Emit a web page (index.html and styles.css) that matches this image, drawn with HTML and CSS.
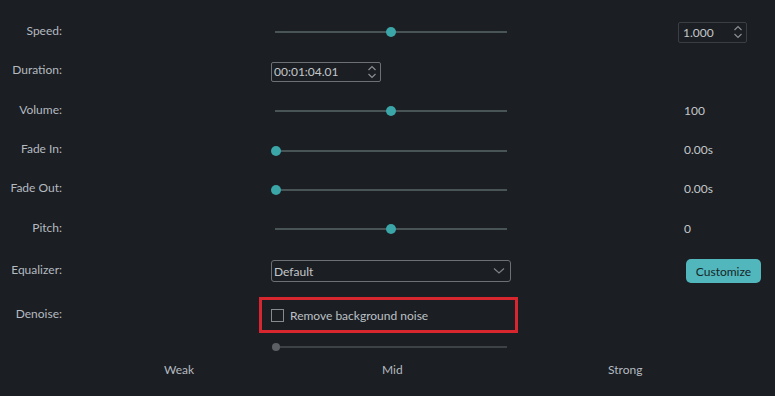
FILE: index.html
```html
<!DOCTYPE html>
<html>
<head>
<meta charset="utf-8">
<link rel="stylesheet" href="styles.css">
</head>
<body>
<div class="panel">
  <div class="row r40"><span class="label">Speed:</span>
    <div class="ctl"><div class="slider"><span class="thumb" style="--p:0.5"></span></div></div>
    <div class="val"><div class="spin small"><span>1.000</span>
      <svg width="10" height="16" viewBox="0 0 10 16"><path d="M1.5 6 L5 2.5 L8.5 6 M1.5 10 L5 13.5 L8.5 10" fill="none" stroke="#8a8f94" stroke-width="1.2"/></svg></div></div>
  </div>
  <div class="row r39"><span class="label">Duration:</span>
    <div class="ctl"><div class="spin dur"><span>00:01:04.01</span>
      <svg width="10" height="16" viewBox="0 0 10 16"><path d="M1.5 6 L5 2.5 L8.5 6 M1.5 10 L5 13.5 L8.5 10" fill="none" stroke="#8a8f94" stroke-width="1.2"/></svg></div></div>
    <div class="val"></div>
  </div>
  <div class="row r40"><span class="label">Volume:</span>
    <div class="ctl"><div class="slider"><span class="thumb" style="--p:0.5"></span></div></div>
    <div class="val"><span class="num">100</span></div>
  </div>
  <div class="row r39"><span class="label">Fade In:</span>
    <div class="ctl"><div class="slider"><span class="thumb" style="--p:0"></span></div></div>
    <div class="val"><span class="num">0.00s</span></div>
  </div>
  <div class="row r39"><span class="label">Fade Out:</span>
    <div class="ctl"><div class="slider"><span class="thumb" style="--p:0"></span></div></div>
    <div class="val"><span class="num">0.00s</span></div>
  </div>
  <div class="row r40"><span class="label">Pitch:</span>
    <div class="ctl"><div class="slider"><span class="thumb" style="--p:0.5"></span></div></div>
    <div class="val"><span class="num">0</span></div>
  </div>
  <div class="row r44"><span class="label">Equalizer:</span>
    <div class="ctl"><div class="select"><span>Default</span>
      <svg width="12" height="8" viewBox="0 0 12 8"><path d="M1 1.5 L6 6 L11 1.5" fill="none" stroke="#7d8286" stroke-width="1.2"/></svg></div></div>
    <div class="val"><button class="btn">Customize</button></div>
  </div>
  <div class="row r44"><span class="label">Denoise:</span>
    <div class="ctl"><div class="highlight"><span class="check"></span><span class="checktext">Remove background noise</span></div></div>
    <div class="val"></div>
  </div>
  <div class="row r20"><span class="label"></span>
    <div class="ctl"><div class="slider off"><span class="thumb" style="--p:0"></span></div></div>
    <div class="val"></div>
  </div>
  <div class="scale">
    <span class="s1">Weak</span><span class="s2">Mid</span><span class="s3">Strong</span>
  </div>
</div>
</body>
</html>
```
FILE: styles.css
```css
html, body {
  margin: 0;
  padding: 0;
  background: #1b1e22;
  width: 775px;
  height: 396px;
  overflow: hidden;
}
body {
  font-family: Lato, "Open Sans", sans-serif;
  font-size: 12px;
  color: #b9bec3;
}
.panel {
  padding-top: 12px;
  display: flex;
  flex-direction: column;
}
.row {
  display: grid;
  grid-template-columns: 271px 240px 1fr;
  align-items: center;
}
.r40 { height: 40px; }
.r39 { height: 39px; }
.r44 { height: 44px; }
.r20 { height: 20px; }
.label {
  width: 62px;
  text-align: right;
  padding-bottom: 4px;
  color: #b4bac0;
  white-space: nowrap;
}
.ctl {
  display: flex;
  align-items: center;
}
.slider {
  position: relative;
  margin-left: 4px;
  width: 232px;
  height: 2px;
  background: #485456;
}
.thumb {
  position: absolute;
  top: -4px;
  left: calc(var(--p) * 230px - 4px);
  width: 10px;
  height: 10px;
  border-radius: 50%;
  background: #3ba6a8;
}
.slider.off { background: #3d4246; }
.slider.off .thumb {
  top: -3px;
  width: 8px;
  height: 8px;
  left: -3px;
  background: #5c6064;
}
.spin {
  display: flex;
  align-items: center;
  justify-content: space-between;
  box-sizing: border-box;
  border-radius: 2px;
}
.spin.dur {
  width: 110px;
  height: 20px;
  border: 1px solid #6d7176;
  padding: 0 3px 0 2px;
  color: #c3c7cb;
}
.spin.small {
  width: 69px;
  height: 21px;
  margin-left: 167px;
  border: 1px solid #3a3f45;
  padding: 0 3px 0 4px;
  color: #c3c7cb;
}
.val {
  display: flex;
  align-items: center;
}
.num {
  margin-left: 173px;
  padding-bottom: 2px;
  color: #c3c7cb;
}
.select {
  display: flex;
  align-items: center;
  justify-content: space-between;
  box-sizing: border-box;
  width: 240px;
  height: 22px;
  border: 1px solid #6d7176;
  border-radius: 3px;
  padding: 0 5px 0 2px;
  color: #c3c7cb;
}
.btn {
  margin-left: 175px;
  width: 75px;
  height: 24px;
  border: none;
  border-radius: 5px;
  background: #52b7bc;
  color: #162629;
  font-family: Lato, "Open Sans", sans-serif;
  font-size: 12px;
  padding: 0;
}
.highlight {
  box-sizing: border-box;
  flex-shrink: 0;
  margin-left: -12px;
  width: 259px;
  height: 36px;
  border: 3px solid #d7262e;
  display: flex;
  align-items: center;
  padding-left: 9px;
}
.check {
  box-sizing: border-box;
  width: 13px;
  height: 13px;
  border: 1px solid #868b90;
  margin-right: 6px;
}
.checktext {
  color: #bcc1c6;
}
.scale {
  height: 24px;
  display: flex;
  align-items: center;
  padding-left: 164px;
  color: #b4bac0;
}
.s1 { width: 218px; }
.s2 { width: 226px; }
```
